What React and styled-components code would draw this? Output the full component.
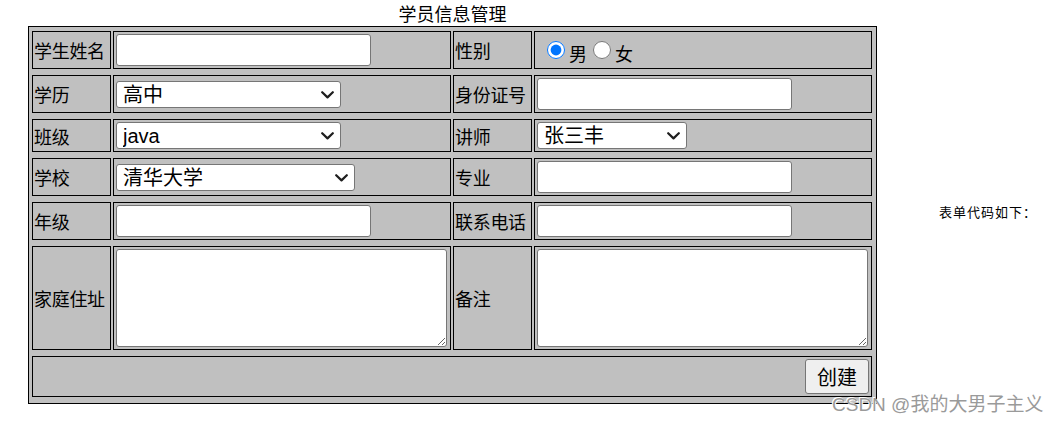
import styled, { createGlobalStyle } from "styled-components";

const GlobalStyle = createGlobalStyle`
  body {
    margin: 0;
    background: #fff;
    font-family: "Noto Sans CJK SC", "Noto Sans", sans-serif;
    color: #000;
  }
`;

const rows = [38, 38, 33, 38, 38, 104, 41];

const Chevron = () => (
  <ChevronIcon width="13" height="8" viewBox="0 0 13 8">
    <path d="M1.2 1.2 L6.5 6.4 L11.8 1.2" fill="none" stroke="#1e1e1e" strokeWidth="2.2" strokeLinecap="round" strokeLinejoin="round" />
  </ChevronIcon>
);

const Dropdown = ({ width, value, options }) => (
  <SelectBox $w={width}>
    <Select defaultValue={value}>
      {options.map((o) => (
        <option key={o}>{o}</option>
      ))}
    </Select>
    <Chevron />
  </SelectBox>
);

const App = () => {
  return (
    <Page>
      <GlobalStyle />
      <FormBlock>
        <Caption>学员信息管理</Caption>
        <Table>
          <Label $h={rows[0]}>学生姓名</Label>
          <Value><TextInput type="text" /></Value>
          <Label>性别</Label>
          <Value>
            <Radio type="radio" name="sex" defaultChecked />
            <RadioText>男</RadioText>
            <Radio type="radio" name="sex" $gap />
            <RadioText>女</RadioText>
          </Value>

          <Label $h={rows[1]}>学历</Label>
          <Value>
            <Dropdown width={225} value="高中" options={["高中", "大专", "本科"]} />
          </Value>
          <Label>身份证号</Label>
          <Value><TextInput type="text" /></Value>

          <Label $h={rows[2]}>班级</Label>
          <Value>
            <Dropdown width={225} value="java" options={["java", "python"]} />
          </Value>
          <Label>讲师</Label>
          <Value>
            <Dropdown width={150} value="张三丰" options={["张三丰", "李四"]} />
          </Value>

          <Label $h={rows[3]}>学校</Label>
          <Value>
            <Dropdown width={239} value="清华大学" options={["清华大学", "北京大学"]} />
          </Value>
          <Label>专业</Label>
          <Value><TextInput type="text" /></Value>

          <Label $h={rows[4]}>年级</Label>
          <Value><TextInput type="text" /></Value>
          <Label>联系电话</Label>
          <Value><TextInput type="text" /></Value>

          <Label $h={rows[5]}>家庭住址</Label>
          <Value><TextArea /></Value>
          <Label>备注</Label>
          <Value><TextArea /></Value>

          <Footer $h={rows[6]}>
            <Button type="button">创建</Button>
          </Footer>
        </Table>
      </FormBlock>
      <Note>表单代码如下：</Note>
      <Watermark>CSDN @我的大男子主义</Watermark>
    </Page>
  );
};

export default App;

const Page = styled.div`
  position: relative;
  height: 425px;
  padding-left: 28px;
  display: flex;
  align-items: flex-start;
`;

const FormBlock = styled.div`
  display: flex;
  flex-direction: column;
  width: 849px;
`;

const Caption = styled.div`
  height: 26px;
  line-height: 26px;
  font-size: 18px;
  text-align: center;
`;

const Table = styled.div`
  box-sizing: border-box;
  width: 849px;
  border: 1px solid #000;
  background: #c0c0c0;
  padding: 4px 4px 6px 3px;
  display: grid;
  grid-template-columns: 79px 338px 79px 338px;
  column-gap: 2px;
  row-gap: 6px;
`;

const Cell = styled.div`
  box-sizing: border-box;
  border: 1px solid #000;
  display: flex;
  align-items: center;
  height: ${(p) => (p.$h ? `${p.$h}px` : "auto")};
`;

const Label = styled(Cell)`
  padding: 0 1px;
  font-size: 18px;
  white-space: nowrap;
  letter-spacing: -0.3px;
`;

const Value = styled(Cell)`
  padding-left: 2px;
`;

const Footer = styled(Cell)`
  grid-column: 1 / -1;
  justify-content: flex-end;
  padding-right: 2px;
`;

const TextInput = styled.input`
  box-sizing: border-box;
  width: 255px;
  height: 32px;
  margin: 0;
  border: 1px solid #767676;
  border-radius: 3px;
  background: #fff;
  font-size: 18px;
  font-family: inherit;
`;

const SelectBox = styled.div`
  position: relative;
  display: flex;
  width: ${(p) => p.$w}px;
  height: 27px;
`;

const Select = styled.select`
  appearance: none;
  box-sizing: border-box;
  width: 100%;
  height: 100%;
  margin: 0;
  padding: 2px 24px 0 6px;
  border: 1px solid #767676;
  border-radius: 3px;
  background-color: #fff;
  color: #000;
  font-size: 20px;
  line-height: 23px;
  font-family: "Liberation Sans", "Noto Sans CJK SC", sans-serif;
`;

const ChevronIcon = styled.svg`
  position: absolute;
  right: 7px;
  top: 10px;
  pointer-events: none;
`;

const TextArea = styled.textarea`
  box-sizing: border-box;
  width: 331px;
  height: 98px;
  margin: 0;
  border: 1px solid #767676;
  border-radius: 3px;
  background: #fff;
  font-family: inherit;
`;

const Radio = styled.input`
  width: 18px;
  height: 18px;
  margin: 0 4px 0 ${(p) => (p.$gap ? 6 : 10)}px;
  accent-color: #0075ff;
`;

const RadioText = styled.span`
  font-size: 18px;
  padding-top: 6px;
`;

const Button = styled.button`
  box-sizing: border-box;
  width: 64px;
  height: 35px;
  margin: 0;
  padding: 0;
  border: 1px solid #767676;
  border-radius: 3px;
  background: #efefef;
  color: #000;
  font-size: 20px;
  font-family: inherit;
`;

const Note = styled.div`
  margin-left: 62px;
  margin-top: 202px;
  font-size: 13px;
  line-height: 19px;
  letter-spacing: 1px;
`;

const Watermark = styled.div`
  position: absolute;
  left: 832px;
  top: 392px;
  font-size: 19px;
  line-height: 26px;
  color: #9a9a9a;
  text-shadow: 1px 1px 0 #fff, -1px -1px 0 #fff;
  white-space: nowrap;
  font-family: "Liberation Sans", "Noto Sans CJK SC", sans-serif;
`;
